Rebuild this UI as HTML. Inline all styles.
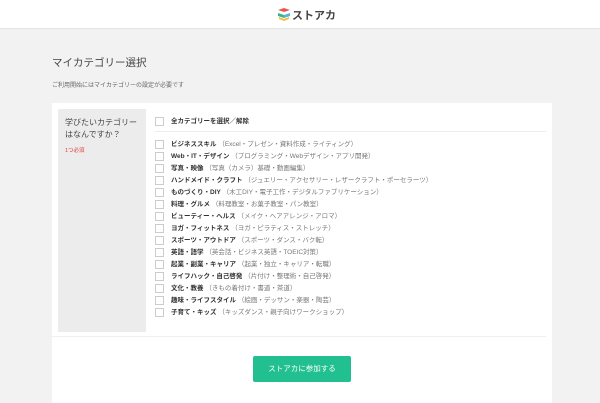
<!DOCTYPE html>
<html><head><meta charset="utf-8"><style>
*{margin:0;padding:0;box-sizing:border-box}
body{width:600px;height:400px;overflow:hidden;background:#f2f2f2;font-family:"Liberation Sans","Noto Sans CJK JP",sans-serif;color:#333;position:relative}
.hdr{position:absolute;left:0;top:0;width:600px;height:29px;background:#fff;border-bottom:1px solid #e4e4e4}
.logo{position:absolute;left:276px;top:7px;font-size:11px;font-weight:bold;color:#444;letter-spacing:0px}
.logo span{margin-left:16px}
h1{position:absolute;left:52px;top:55px;font-size:10.5px;font-weight:normal;color:#444}
.note{position:absolute;left:52px;top:80px;font-size:6px;color:#666}
.card{position:absolute;left:52px;top:103px;width:500px;height:300px;background:#fff}
.side{position:absolute;left:6px;top:6px;width:88px;height:223px;background:#ececec;padding:8px 7px}
.side .q{font-size:8px;line-height:12px;color:#444}
.side .r{font-size:5.5px;color:#e04040;margin-top:5px}
.cb{position:absolute;left:103px;width:9px;height:9px;border:1px solid #ccc;background:#fff}
.row{position:absolute;left:119px;font-size:6.5px;white-space:nowrap;color:#333;line-height:9px}
.row b{font-weight:bold}
.row i{font-style:normal;color:#777}
.sep{position:absolute;left:103px;top:28px;width:391px;height:1px;background:#eee}
.sep2{position:absolute;left:0;top:233px;width:494px;height:1px;background:#f0f0f0}
.btn{position:absolute;left:201px;top:253px;width:98px;height:26px;background:#22bf90;border-radius:2px;color:#fff;font-size:7.5px;text-align:center;line-height:26px}
</style></head><body>
<div class="hdr"><svg style="position:absolute;left:277px;top:7px" width="15" height="15" viewBox="0 0 15 15"><path d="M1 3l6-2 6 2-6 2z" fill="#e8584a"/><path d="M1 6l6 2v3L1 9z" fill="#3bb38a"/><path d="M13 6l-6 2v3l6-2z" fill="#5bb2e0"/><path d="M2 10l5 2 5-2v2l-5 2-5-2z" fill="#f0c030"/></svg><div class="logo"><span>ストアカ</span></div></div>
<h1>マイカテゴリー選択</h1>
<div class="note">ご利用開始にはマイカテゴリーの設定が必要です</div>
<div class="card">
<div class="side"><div class="q">学びたいカテゴリー<br>はなんですか？</div><div class="r">1つ必須</div></div>
<div class="cb" style="top:14px"></div><div class="row" style="top:14px"><b>全カテゴリーを選択／解除</b></div>
<div class="sep"></div>
<div class="cb" style="top:37px"></div><div class="row" style="top:37px"><b>ビジネススキル</b> <i>（Excel・プレゼン・資料作成・ライティング）</i></div>
<div class="cb" style="top:49px"></div><div class="row" style="top:49px"><b>Web・IT・デザイン</b> <i>（プログラミング・Webデザイン・アプリ開発）</i></div>
<div class="cb" style="top:61px"></div><div class="row" style="top:61px"><b>写真・映像</b> <i>（写真（カメラ）基礎・動画編集）</i></div>
<div class="cb" style="top:73px"></div><div class="row" style="top:73px"><b>ハンドメイド・クラフト</b> <i>（ジュエリー・アクセサリー・レザークラフト・ポーセラーツ）</i></div>
<div class="cb" style="top:85px"></div><div class="row" style="top:85px"><b>ものづくり・DIY</b> <i>（木工DIY・電子工作・デジタルファブリケーション）</i></div>
<div class="cb" style="top:97px"></div><div class="row" style="top:97px"><b>料理・グルメ</b> <i>（料理教室・お菓子教室・パン教室）</i></div>
<div class="cb" style="top:109px"></div><div class="row" style="top:109px"><b>ビューティー・ヘルス</b> <i>（メイク・ヘアアレンジ・アロマ）</i></div>
<div class="cb" style="top:121px"></div><div class="row" style="top:121px"><b>ヨガ・フィットネス</b> <i>（ヨガ・ピラティス・ストレッチ）</i></div>
<div class="cb" style="top:133px"></div><div class="row" style="top:133px"><b>スポーツ・アウトドア</b> <i>（スポーツ・ダンス・バク転）</i></div>
<div class="cb" style="top:145px"></div><div class="row" style="top:145px"><b>英語・語学</b> <i>（英会話・ビジネス英語・TOEIC対策）</i></div>
<div class="cb" style="top:157px"></div><div class="row" style="top:157px"><b>起業・副業・キャリア</b> <i>（起業・独立・キャリア・転職）</i></div>
<div class="cb" style="top:169px"></div><div class="row" style="top:169px"><b>ライフハック・自己啓発</b> <i>（片付け・整理術・自己啓発）</i></div>
<div class="cb" style="top:181px"></div><div class="row" style="top:181px"><b>文化・教養</b> <i>（きもの着付け・書道・茶道）</i></div>
<div class="cb" style="top:193px"></div><div class="row" style="top:193px"><b>趣味・ライフスタイル</b> <i>（絵画・デッサン・楽器・陶芸）</i></div>
<div class="cb" style="top:205px"></div><div class="row" style="top:205px"><b>子育て・キッズ</b> <i>（キッズダンス・親子向けワークショップ）</i></div>
<div class="sep2"></div>
<div class="btn">ストアカに参加する</div>
</div>
</body></html>
